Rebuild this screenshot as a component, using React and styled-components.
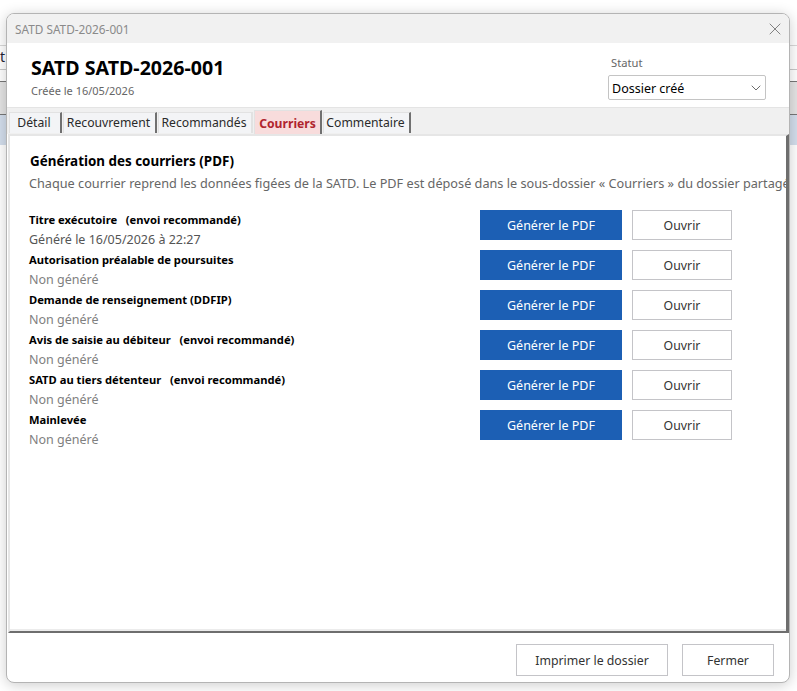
import React from "react";
import styled, { createGlobalStyle } from "styled-components";
import { ChevronDown, X } from "lucide-react";

const Global = createGlobalStyle`
  html, body { margin: 0; padding: 0; height: 100%; overflow: hidden; background: #fff; }
  body { font-family: "Noto Sans", "Open Sans", sans-serif; }
  * { box-sizing: border-box; }
`;

const Page = styled.div`
  position: relative;
  width: 797px;
  height: 691px;
  overflow: hidden;
  background: #fff;
  padding-top: 45px;
`;
const BackLine = styled.div`
  height: 25px;
  border-top: 1px solid #d8d8d8;
  border-bottom: 1px solid #c8c8c8;
  font-size: 14px;
  line-height: 22px;
  color: #223;
`;
const BackBar = styled.div`
  margin-top: 11px;
  height: 33px;
  background: #e4e4e4;
  border-top: 1px solid #777;
`;
const BackBlue = styled.div`
  height: 31px;
  background: #d3deec;
  border-top: 1px solid #777;
`;

const Dialog = styled.div`
  position: absolute;
  left: 6px;
  top: 13px;
  width: 784px;
  height: 670px;
  display: flex;
  flex-direction: column;
  background: #fff;
  border: 1px solid #b4b4b4;
  border-radius: 8px;
  box-shadow: 0 2px 14px rgba(0, 0, 0, 0.2);
  overflow: hidden;
`;
const TitleBar = styled.div`
  height: 29px;
  flex: none;
  background: #f1f1f1;
  display: flex;
  align-items: center;
  justify-content: space-between;
  padding: 0 4px 0 8px;
  font-size: 11.8px;
  color: #8a8a8a;
`;
const Header = styled.div`
  height: 65px;
  flex: none;
  display: flex;
  justify-content: space-between;
  padding: 11px 23px 0 24px;
  border-bottom: 1px solid #e4e4e4;
`;
const HeadTitle = styled.div`
  font-size: 19.6px;
  font-weight: 700;
  line-height: 26px;
  margin-top: 1px;
  color: #000;
`;
const HeadSub = styled.div`
  font-size: 11px;
  line-height: 16px;
  margin-top: 2px;
  color: #666;
`;
const StatusBox = styled.div`
  width: 158px;
  margin-top: 1px;
  display: flex;
  flex-direction: column;
`;
const StatusLabel = styled.div`
  font-size: 11.2px;
  line-height: 16px;
  padding-left: 3px;
  margin-bottom: 4px;
  color: #666;
`;
const Select = styled.div`
  height: 25px;
  display: flex;
  align-items: center;
  justify-content: space-between;
  padding: 1px 1px 0 3px;
  border: 1px solid #c4c4c4;
  border-radius: 2px;
  font-size: 12.5px;
  color: #000;
`;
const TabBar = styled.div`
  height: 26px;
  flex: none;
  background: #f0f0f0;
  display: flex;
  align-items: flex-end;
  padding: 0 0 1px 2px;
  gap: 1px;
`;
const Tab = styled.div`
  height: ${(p) => (p.$active ? 24 : 21)}px;
  margin-bottom: ${(p) => (p.$active ? -1 : 0)}px;
  width: ${(p) => p.$w}px;
  display: flex;
  align-items: center;
  justify-content: center;
  padding: ${(p) => (p.$active ? "1px 0 0 0" : "0 2px 1px 0")};
  font-size: 12.2px;
  font-weight: ${(p) => (p.$active ? 700 : 400)};
  color: ${(p) => (p.$active ? "#b0252f" : "#2a2a2a")};
  background: ${(p) => (p.$active ? "#f8dcdc" : "#f3f4f6")};
  border-top: 1px solid #e2e2e2;
  border-left: 1px solid #e2e2e2;
  border-right: 2px solid ${(p) => (p.$plain ? "#e2e2e2" : "#707070")};
`;
const Panel = styled.div`
  flex: 1;
  min-height: 0;
  margin: 0 0 0 1px;
  padding: 16px 0 0 20px;
  overflow: hidden;
  border-top: 2px solid #e6e6e6;
  border-left: 2px solid #e6e6e6;
  border-right: 3px solid #6e6e6e;
  border-bottom: 2px solid #6e6e6e;
  box-shadow: inset 0 -2px 0 #ececec;
`;
const SectionTitle = styled.div`
  font-size: 13.4px;
  font-weight: 700;
  line-height: 18px;
  color: #000;
`;
const SectionDesc = styled.div`
  font-size: 12.7px;
  line-height: 18px;
  margin-top: 4px;
  margin-left: -1px;
  white-space: nowrap;
  color: #666;
`;
const Rows = styled.div`
  margin-top: 18px;
  margin-left: -1px;
  display: flex;
  flex-direction: column;
`;
const Row = styled.div`
  height: 40px;
  display: flex;
`;
const Info = styled.div`
  width: 451px;
  display: flex;
  flex-direction: column;
`;
const Label = styled.div`
  font-size: 11.2px;
  font-weight: 700;
  line-height: 20px;
  white-space: pre;
  color: #000;
`;
const Status = styled.div`
  font-size: 12.5px;
  line-height: 20px;
  color: ${(p) => (p.$done ? "#555" : "#808080")};
`;
const Primary = styled.button`
  width: 142px;
  height: 30px;
  border: 0;
  background: #1c5fb4;
  color: #fff;
  font: 12.5px "Noto Sans", sans-serif;
  padding: 0;
`;
const Secondary = styled.button`
  width: ${(p) => p.$w || 100}px;
  height: ${(p) => p.$h || 30}px;
  margin-left: ${(p) => p.$ml ?? 10}px;
  border: 1px solid #c4c4c8;
  background: #fff;
  color: #333;
  font: 12.3px "Noto Sans", sans-serif;
  padding: 0;
`;
const Footer = styled.div`
  height: 49px;
  flex: none;
  display: flex;
  justify-content: flex-end;
  padding: 11px 15px 0 0;
`;

const rows = [
  ["Titre exécutoire   (envoi recommandé)", "Généré le 16/05/2026 à 22:27", true],
  ["Autorisation préalable de poursuites", "Non généré"],
  ["Demande de renseignement (DDFIP)", "Non généré"],
  ["Avis de saisie au débiteur   (envoi recommandé)", "Non généré"],
  ["SATD au tiers détenteur   (envoi recommandé)", "Non généré"],
  ["Mainlevée", "Non généré"],
];

const tabs = [
  { label: "Détail", width: 53 },
  { label: "Recouvrement", width: 94 },
  { label: "Recommandés", width: 95, plain: true },
  { label: "Courriers", width: 68, active: true },
  { label: "Commentaire", width: 88 },
];

export default function App() {
  return (
    <Page>
      <Global />
      <BackLine>t</BackLine>
      <BackBar />
      <BackBlue />
      <Dialog>
        <TitleBar>
          <span>SATD SATD-2026-001</span>
          <X size={20} strokeWidth={1.1} color="#777" />
        </TitleBar>
        <Header>
          <div>
            <HeadTitle>SATD SATD-2026-001</HeadTitle>
            <HeadSub>Créée le 16/05/2026</HeadSub>
          </div>
          <StatusBox>
            <StatusLabel>Statut</StatusLabel>
            <Select>
              <span>Dossier créé</span>
              <ChevronDown size={16} strokeWidth={1.3} color="#555" />
            </Select>
          </StatusBox>
        </Header>
        <TabBar>
          {tabs.map((t) => (
            <Tab key={t.label} $w={t.width} $active={t.active} $plain={t.plain}>{t.label}</Tab>
          ))}
        </TabBar>
        <Panel>
          <SectionTitle>Génération des courriers (PDF)</SectionTitle>
          <SectionDesc>
            Chaque courrier reprend les données figées de la SATD. Le PDF est déposé dans le sous-dossier « Courriers » du dossier partagé.
          </SectionDesc>
          <Rows>
            {rows.map(([l, s, d]) => (
              <Row key={l}>
                <Info>
                  <Label>{l}</Label>
                  <Status $done={d}>{s}</Status>
                </Info>
                <Primary>Générer le PDF</Primary>
                <Secondary>Ouvrir</Secondary>
              </Row>
            ))}
          </Rows>
        </Panel>
        <Footer>
          <Secondary $w={152} $h={32} $ml={0}>Imprimer le dossier</Secondary>
          <Secondary $w={92} $h={32} $ml={14}>Fermer</Secondary>
        </Footer>
      </Dialog>
    </Page>
  );
}
